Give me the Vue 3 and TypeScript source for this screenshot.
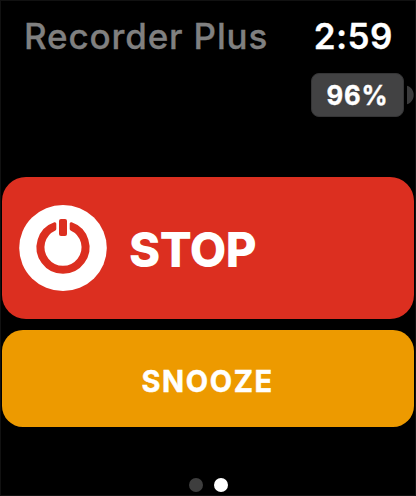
<script setup lang="ts">
import { ref } from 'vue'

const time = ref<string>('2:59')
const battery = ref<number>(96)
const pages = ['main', 'alarm'] as const
const activePage = ref<(typeof pages)[number]>('alarm')
</script>

<template>
  <main class="watch">
    <header class="status">
      <span class="title">Recorder Plus</span>
      <span class="time">{{ time }}</span>
    </header>
    <div class="battery-row">
      <div class="battery"><span class="level">{{ battery }}%</span></div>
      <svg class="nub" width="7" height="20" viewBox="0 0 7 20">
        <path d="M0 .8C4 2 6.7 5.5 6.7 10S4 18 0 19.2Z" fill="#3b3b3c" />
      </svg>
    </div>
    <button class="stop" type="button">
      <svg class="power" width="88" height="88" viewBox="0 0 88 88">
        <ellipse cx="44" cy="44" rx="43.8" ry="43" fill="#fff" />
        <path
          d="M35.8 19.7A25 25 0 1 0 52.2 19.7V25.06A20 20 0 1 1 35.8 25.06Z"
          fill="#dc2f20" stroke="#dc2f20" stroke-width="3" stroke-linejoin="round"
        />
        <rect x="40" y="15" width="8" height="17" rx="2" fill="#dc2f20" />
      </svg>
      <span class="stop-label">STOP</span>
    </button>
    <button class="snooze" type="button"><span class="snooze-label">SNOOZE</span></button>
    <nav class="dots">
      <i v-for="page in pages" :key="page" class="dot" :class="{ active: page === activePage }"></i>
    </nav>
  </main>
</template>

<style>
body {
  background: #000;
}
</style>

<style scoped>
.watch {
  box-sizing: border-box;
  width: 416px;
  height: 496px;
  padding: 0 1px;
  border: 1px solid #111;
  background: #000;
  color: #fff;
  font-family: Inter, "Liberation Sans", sans-serif;
  display: flex;
  flex-direction: column;
  overflow: hidden;
}
.status {
  display: flex;
  justify-content: space-between;
  padding: 13px 21px 0 22px;
  height: 45px;
  line-height: 44px;
  font-size: 35px;
  white-space: nowrap;
}
.title {
  color: #808080;
  font-weight: 500;
  letter-spacing: 0.84px;
  -webkit-text-stroke: 0.3px #808080;
}
.time {
  font-weight: 600;
  letter-spacing: 0.5px;
  -webkit-text-stroke: 0.3px #fff;
}
.battery-row {
  display: flex;
  justify-content: flex-end;
  align-items: center;
  gap: 3px;
  margin-top: 14px;
}
.battery {
  box-sizing: border-box;
  width: 93px;
  height: 44px;
  border: 1px solid #353536;
  border-radius: 8px;
  background: #424243;
  display: flex;
  align-items: center;
  justify-content: center;
  font-size: 27px;
  font-weight: 700;
}
.level {
  letter-spacing: 0.8px;
  margin-right: 0.2px;
  padding-top: 1px;
  transform: scaleX(0.95);
  -webkit-text-stroke: 0.4px #fff;
}
.nub {
  display: block;
}
button {
  border: 0;
  margin: 0;
  padding: 0;
  color: #fff;
  font-family: inherit;
  font-weight: 700;
  display: flex;
  align-items: center;
  flex: none;
}
.stop {
  height: 141.5px;
  margin-top: 60.3px;
  padding-left: 17.2px;
  border-radius: 24px;
  background: #dc2f20;
  font-size: 48.5px;
}
.power {
  flex: none;
}
.stop-label {
  margin-left: 22px;
  padding-top: 2px;
  font-weight: 800;
  letter-spacing: -0.5px;
  transform: scaleX(0.975);
  transform-origin: left;
}
.snooze {
  height: 97.4px;
  margin-top: 11.2px;
  padding: 3px 2px 0 0;
  border-radius: 21px;
  background: #ed9a00;
  justify-content: center;
  font-size: 30.5px;
}
.snooze-label {
  letter-spacing: 1.7px;
  margin-right: -1.7px;
  transform: scaleX(0.95);
  -webkit-text-stroke: 0.5px #fff;
}
.dots {
  display: flex;
  justify-content: center;
  gap: 11px;
  margin-top: 50.6px;
}
.dot {
  width: 14px;
  height: 14px;
  border-radius: 50%;
  background: #3e3e3e;
}
.dot.active {
  background: #fff;
}
</style>
